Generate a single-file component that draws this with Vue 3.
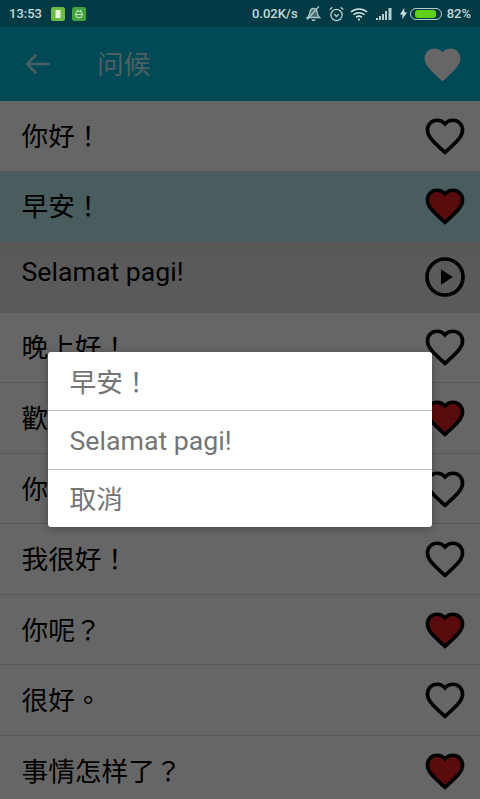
<template>
  <div class="screen">
    <div class="status-bar">
      <span class="clock">13:53</span>
      <svg class="notif" viewBox="0 0 14 14"><rect width="14" height="14" rx="2.5" fill="#6bbd42" /><rect x="4.5" y="3" width="5" height="8" fill="#e4f5d8" /></svg>
      <svg class="notif" viewBox="0 0 14 14"><rect width="14" height="14" rx="2.5" fill="#45a33f" /><circle cx="7" cy="7.500" r="3.400" fill="none" stroke="#d8f2d0" stroke-width="0.9" /><path d="M3.600 7.500h6.800M5 2.800l1 1.500M9 2.800 8 4.300" stroke="#d8f2d0" stroke-width="0.9" /></svg>
      <span class="spacer"></span>
      <span class="speed">0.02K/s</span>
      <svg class="st-icon mute" viewBox="0 0 16 17" fill="none" stroke="#a9c5c5" stroke-width="1.400"><path d="M2.500 12.500c1.800-1 2-2.800 2.300-4.800C5.200 5 6.800 3.500 8.500 3.500s3.300 1.500 3.600 4c.3 2 .6 3.800 2.400 5H2.500z" fill="#3f6a6e" /><path d="M6.800 15.200h3.400M14 1.500 2 14.500" /></svg>
      <svg class="st-icon alarm" viewBox="0 0 15 16" fill="none" stroke="#b5cfcf" stroke-width="1.300"><circle cx="7.500" cy="9" r="5.600" /><path d="M5.300 8.300 7.500 10.500l2.200-2.200M.8 3.500 3.300 1.200M14.200 3.500 11.700 1.200" /></svg>
      <svg class="st-icon wifi" viewBox="0 0 18 14" fill="none" stroke="#d2e4e4" stroke-width="1.500"><path d="M1 5c4.500-4 11.500-4 16 0M3.500 7.800c3-2.600 8-2.600 11 0M6 10.300c1.800-1.400 4.200-1.400 6 0" /><circle cx="9" cy="12.500" r="1.100" fill="#d2e4e4" stroke="none" /></svg>
      <svg class="st-icon signal" viewBox="0 0 17 12" fill="#b5cfcf"><rect x="0" y="10" width="2" height="2" /><rect x="3" y="8" width="2" height="4" /><rect x="6" y="6" width="2" height="6" /><rect x="9" y="3" width="2" height="9" /><rect x="12.500" y="0" width="3" height="12" /></svg>
      <svg class="st-icon bolt" viewBox="0 0 8 13" fill="#d2e4e4"><path d="M5 0 0 7.500h3L2.500 13 8 5H4.800z" /></svg>
      <span class="battery"><span class="battery-fill"></span></span>
      <span class="percent">82%</span>
    </div>

    <div class="app-bar">
      <svg class="back" viewBox="0 0 24 24" fill="none" stroke="#fff" stroke-width="2"><path d="M22 12H4M11.500 4.500 4 12l7.500 7.500" /></svg>
      <span class="title">问候</span>
      <svg class="bar-heart" viewBox="0 0 24 24"><path :d="heartPath" fill="#fff" /></svg>
    </div>

    <div class="list">
      <div v-for="row in rows" :key="row.text" class="row" :class="row.kind">
        <span class="row-text">{{ row.text }}</span>
        <svg v-if="row.kind === 'play'" class="row-icon" viewBox="0 0 24 24">
          <circle cx="12" cy="12" r="10.300" fill="none" stroke="#000" stroke-width="2.100" />
          <path d="M9.700 7.600v8.800l6.800-4.400z" fill="#000" />
        </svg>
        <svg v-else class="row-icon" viewBox="0 0 24 24">
          <path :d="heartPath" :fill="row.liked ? '#e0201f' : 'none'" stroke="#000" stroke-width="2.100" />
        </svg>
      </div>
    </div>

    <div class="scrim"></div>

    <div class="dialog">
      <div v-for="item in menu" :key="item" class="dialog-item"><span class="dialog-text">{{ item }}</span></div>
    </div>
  </div>
</template>

<script setup>
const heartPath = 'M12 21.35l-1.45-1.32C5.4 15.36 2 12.28 2 8.5 2 5.42 4.42 3 7.5 3c1.74 0 3.41.81 4.5 2.09C13.09 3.81 14.76 3 16.5 3 19.58 3 22 5.42 22 8.5c0 3.78-3.4 6.86-8.55 11.54L12 21.35z'

const rows = [
  { text: '你好！', liked: false },
  { text: '早安！', liked: true, kind: 'selected' },
  { text: 'Selamat pagi!', kind: 'play' },
  { text: '晚上好！', liked: false },
  { text: '歡迎！', liked: true },
  { text: '你好吗？', liked: false },
  { text: '我很好！', liked: false },
  { text: '你呢？', liked: true },
  { text: '很好。', liked: false },
  { text: '事情怎样了？', liked: true },
]

const menu = ['早安！', 'Selamat pagi!', '取消']
</script>

<style>
html, body {
  margin: 0;
  overflow: hidden;
}
</style>

<style scoped>
.screen {
  position: relative;
  width: 480px;
  height: 799px;
  overflow: hidden;
  background: #fff;
  font-family: Roboto, "Noto Sans CJK TC", sans-serif;
}

.status-bar {
  position: relative;
  z-index: 2;
  display: flex;
  align-items: center;
  height: 27px;
  padding: 0 9px 0 9px;
  box-sizing: border-box;
  background: #003a44;
  color: #c3dadb;
  font-size: 13px;
  font-weight: 500;
}

.clock {
  margin-right: 9px;
}

.notif {
  width: 14px;
  height: 14px;
  margin-right: 7px;
}

.spacer {
  flex: 1;
}

.st-icon {
  flex: none;
}

.mute {
  width: 16px;
  height: 17px;
  margin-left: 7px;
}

.alarm {
  width: 15px;
  height: 16px;
  margin-left: 8px;
}

.wifi {
  width: 18px;
  height: 14px;
  margin-left: 6px;
}

.signal {
  width: 17px;
  height: 12px;
  margin-left: 8px;
}

.bolt {
  width: 7px;
  height: 13px;
  margin-left: 7px;
}

.battery {
  display: block;
  box-sizing: border-box;
  width: 32px;
  height: 12px;
  margin-left: 3px;
  padding: 1px 5px 1px 4px;
  border: 1px solid #b5cfcf;
  border-radius: 6px;
}

.battery-fill {
  display: block;
  height: 100%;
  border-radius: 3px;
  background: #5fd016;
}

.percent {
  margin-left: 5px;
}

.app-bar {
  display: flex;
  align-items: center;
  height: 74px;
  padding: 0 16px 0 22px;
  box-sizing: border-box;
  background: #00b8da;
  box-shadow: 0 1px 3px rgba(0, 0, 0, 0.4);
}

.back {
  width: 30px;
  height: 30px;
  opacity: 0.75;
}

.title {
  flex: 1;
  margin-left: 45px;
  padding-bottom: 4px;
  color: #fff;
  opacity: 0.75;
  font-size: 26.7px;
}

.bar-heart {
  width: 43px;
  height: 43px;
}

.list {
  display: flex;
  flex-direction: column;
}

.row {
  display: flex;
  align-items: center;
  justify-content: space-between;
  flex: none;
  box-sizing: border-box;
  height: 70.55px;
  padding: 0 14px 0 21.5px;
  border-bottom: 1px solid #d9d9d9;
  background: #fff;
}

.row.selected {
  background: #b6e8ec;
  border-bottom-color: #b6e8ec;
}

.row.play {
  background: linear-gradient(#d8d8d8, #e2e2e2 30%);
  border-bottom-color: #e2e2e2;
}

.row-text {
  padding-bottom: 3px;
  color: #000;
  font-size: 26.7px;
  white-space: nowrap;
}

.row.play .row-text {
  padding-bottom: 9px;
}

.row-icon {
  width: 42px;
  height: 42px;
  overflow: visible;
}

.scrim {
  position: absolute;
  inset: 27px 0 0 0;
  background: rgba(0, 0, 0, 0.6);
}

.dialog {
  position: absolute;
  left: 48px;
  top: 352px;
  width: 384px;
  border-radius: 3px;
  overflow: hidden;
  background: #fff;
  box-shadow: 0 2px 10px rgba(0, 0, 0, 0.3);
}

.dialog-item {
  display: flex;
  align-items: center;
  box-sizing: border-box;
  height: 59px;
  padding: 0 21.5px;
  border-bottom: 1px solid #bdbdbd;
  color: #757575;
  font-size: 26.7px;
}

.dialog-text {
  padding-bottom: 2px;
}

.dialog-item:nth-child(2) .dialog-text {
  padding-bottom: 0;
  padding-top: 1px;
}

.dialog-item:last-child {
  height: 57px;
  border-bottom: 0;
}
</style>
